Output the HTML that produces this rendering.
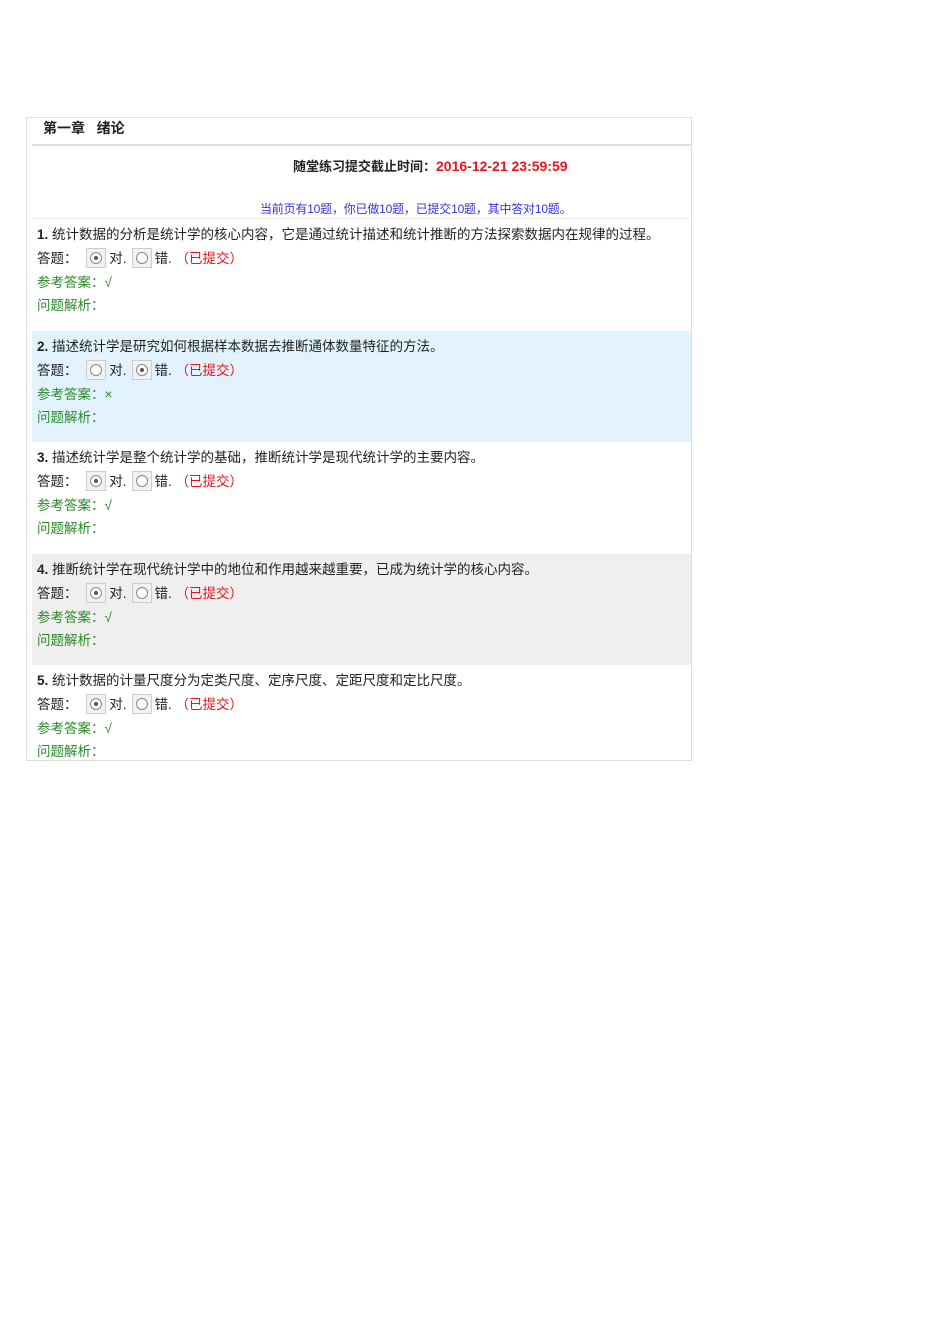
<!DOCTYPE html>
<html><head><meta charset="utf-8"><style>
body{margin:0;background:#fff;font-family:"Liberation Sans","Noto Sans CJK SC",sans-serif;font-size:13.5px;color:#222;}
.box{position:absolute;left:26px;top:117px;width:664px;height:642px;border:1px solid #ddd;border-top:1px solid #e4e4e4;overflow:hidden;}
.hd{position:absolute;left:16px;top:0px;font-weight:bold;font-size:14px;}
.line{position:absolute;left:5px;right:0;top:26px;border-top:2px solid #ddd;}
.dl{position:absolute;left:266px;top:38px;font-weight:bold;font-size:13px;}
.dl span{color:#e8141a;font-size:14px;}
.st{position:absolute;left:233px;top:82px;color:#3333dd;font-size:12px;letter-spacing:-0.2px;}
.sep{position:absolute;left:5px;right:0;top:100px;border-top:1px solid #eee;}
.q{position:absolute;left:5px;right:0;height:111px;}
.q div{position:absolute;left:5px;white-space:nowrap;}
.t{top:4px}.a{top:28px}.r{top:52px;color:#2a8a2a}.p{top:75px;color:#2a8a2a}
.rb{display:inline-block;width:18px;height:18px;border:1px solid #ccc;background:#f2f2f2;vertical-align:middle;margin:0 3px 0 5px;position:relative;top:-1px;}
.rb:after{content:"";position:absolute;left:3px;top:3px;width:10px;height:10px;border:1px solid #888;border-radius:50%;background:#fff;}
.rb.on:before{content:"";position:absolute;left:7px;top:7px;width:4px;height:4px;border-radius:50%;background:#555;z-index:1;}
.red{color:#e8141a}
</style></head><body>
<div class="box">
<div class="hd">第一章&nbsp;&nbsp;&nbsp;绪论</div>
<div class="line"></div>
<div class="dl">随堂练习提交截止时间：<span>2016-12-21 23:59:59</span></div>
<div class="st">当前页有10题，你已做10题，已提交10题，其中答对10题。</div>
<div class="sep"></div>
<div class="q" style="top:101px"><div class="t"><b>1.</b> 统计数据的分析是统计学的核心内容，它是通过统计描述和统计推断的方法探索数据内在规律的过程。</div><div class="a">答题：&nbsp;<span class="rb on"></span>对.<span class="rb"></span>错. <span class="red">（已提交）</span></div><div class="r">参考答案：√</div><div class="p">问题解析：</div></div>
<div class="q" style="top:213px;background:#e3f3fd"><div class="t"><b>2.</b> 描述统计学是研究如何根据样本数据去推断通体数量特征的方法。</div><div class="a">答题：&nbsp;<span class="rb"></span>对.<span class="rb on"></span>错. <span class="red">（已提交）</span></div><div class="r">参考答案：×</div><div class="p">问题解析：</div></div>
<div class="q" style="top:324px"><div class="t"><b>3.</b> 描述统计学是整个统计学的基础，推断统计学是现代统计学的主要内容。</div><div class="a">答题：&nbsp;<span class="rb on"></span>对.<span class="rb"></span>错. <span class="red">（已提交）</span></div><div class="r">参考答案：√</div><div class="p">问题解析：</div></div>
<div class="q" style="top:436px;background:#efefef"><div class="t"><b>4.</b> 推断统计学在现代统计学中的地位和作用越来越重要，已成为统计学的核心内容。</div><div class="a">答题：&nbsp;<span class="rb on"></span>对.<span class="rb"></span>错. <span class="red">（已提交）</span></div><div class="r">参考答案：√</div><div class="p">问题解析：</div></div>
<div class="q" style="top:547px"><div class="t"><b>5.</b> 统计数据的计量尺度分为定类尺度、定序尺度、定距尺度和定比尺度。</div><div class="a">答题：&nbsp;<span class="rb on"></span>对.<span class="rb"></span>错. <span class="red">（已提交）</span></div><div class="r">参考答案：√</div><div class="p">问题解析：</div></div>
</div>
</body></html>
